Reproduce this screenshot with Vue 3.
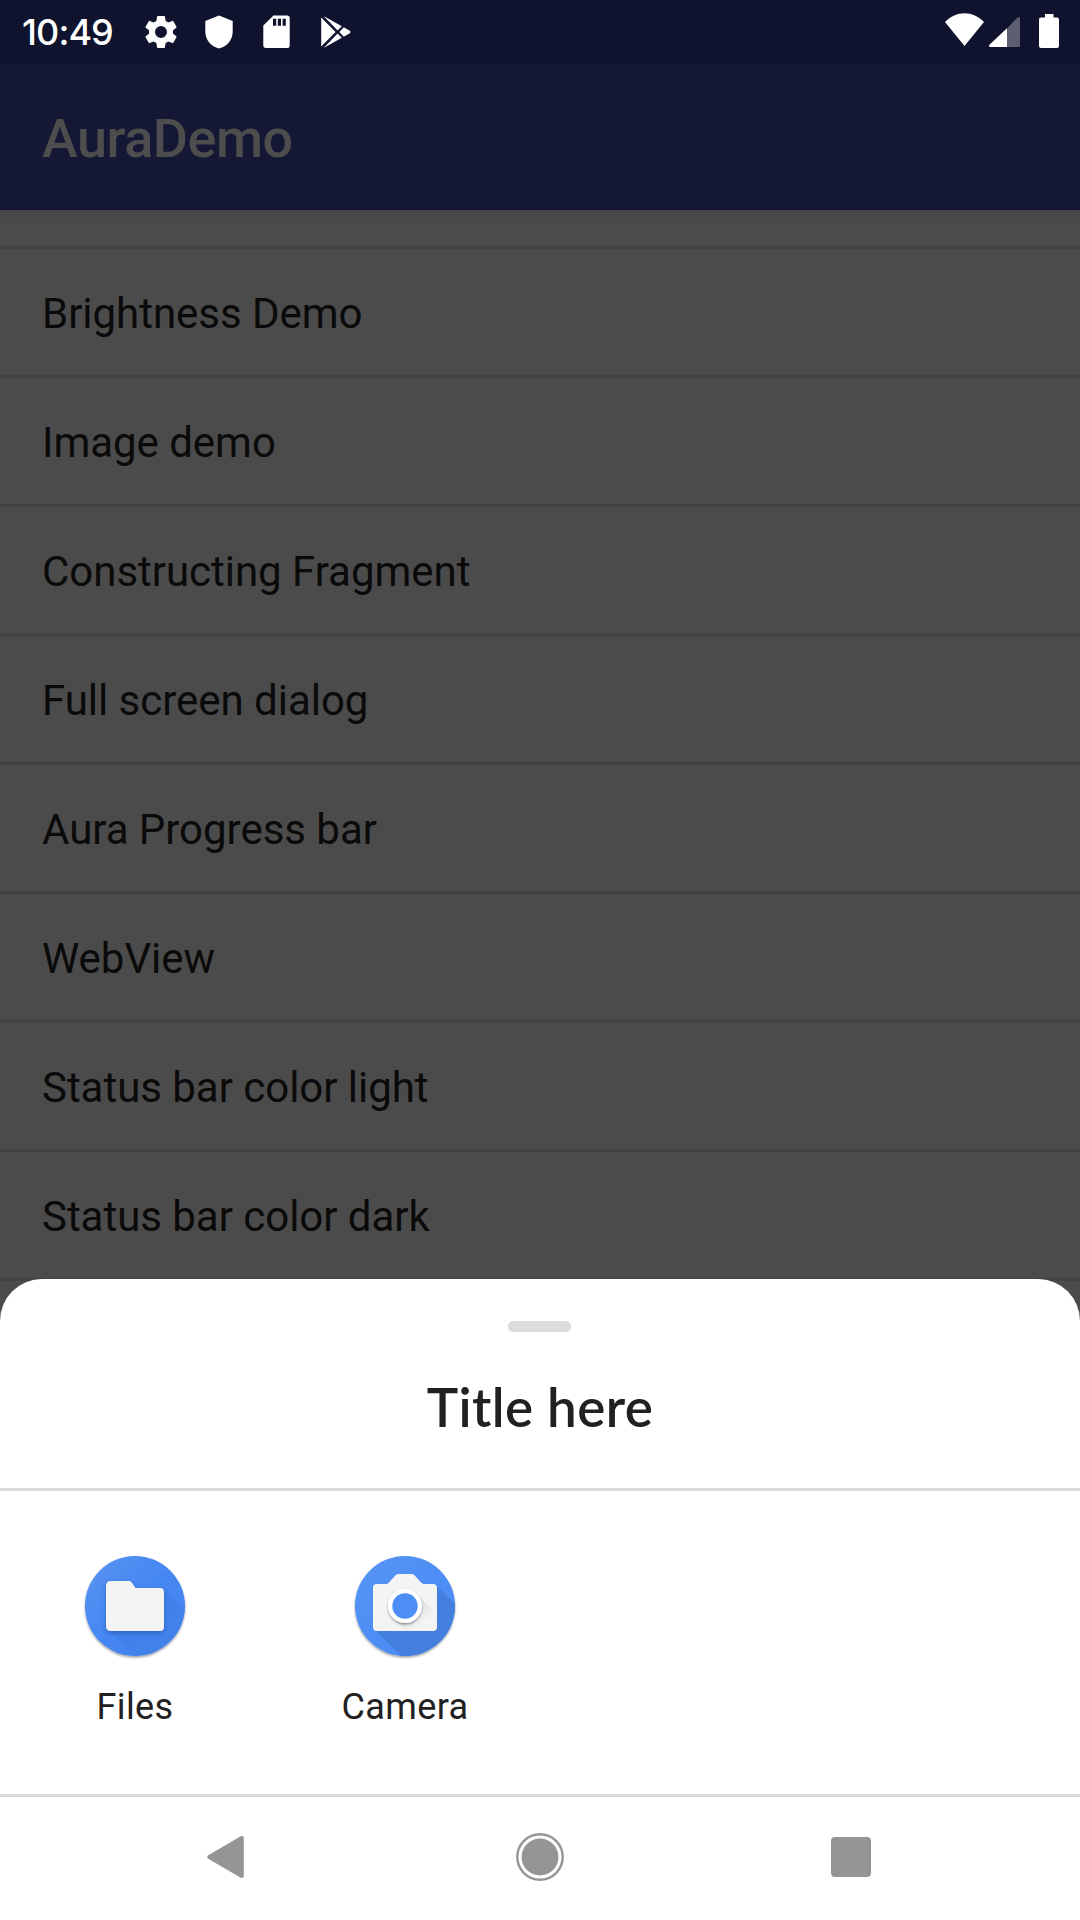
<script setup>
const items = [
  'Brightness Demo',
  'Image demo',
  'Constructing Fragment',
  'Full screen dialog',
  'Aura Progress bar',
  'WebView',
  'Status bar color light',
  'Status bar color dark',
]
</script>

<template>
  <div class="screen">
    <header class="status">
      <span class="clock">10:49</span>
      <svg class="gear" width="40" height="40" viewBox="0 0 24 24"><path d="M19.14 12.94c.04-.3.06-.61.06-.94s-.02-.64-.07-.94l2.03-1.58c.18-.14.23-.41.12-.61l-1.92-3.32c-.12-.22-.37-.29-.59-.22l-2.39.96c-.5-.38-1.03-.7-1.62-.94L14.4 2.81c-.04-.24-.24-.41-.48-.41h-3.84c-.24 0-.43.17-.47.41l-.36 2.54c-.59.24-1.13.57-1.62.94l-2.39-.96c-.22-.08-.47 0-.59.22L2.74 8.87c-.12.21-.08.47.12.61l2.03 1.58c-.05.3-.09.63-.09.94s.02.64.07.94l-2.03 1.58c-.18.14-.23.41-.12.61l1.92 3.32c.12.22.37.29.59.22l2.39-.96c.5.38 1.03.7 1.62.94l.36 2.54c.05.24.24.41.48.41h3.84c.24 0 .44-.17.47-.41l.36-2.54c.59-.24 1.13-.56 1.62-.94l2.39.96c.22.08.47 0 .59-.22l1.92-3.32c.12-.22.07-.47-.12-.61l-2.01-1.58zM12 15.6A3.6 3.6 0 1 1 12 8.400a3.600 3.600 0 0 1 0 7.200z" /></svg>
      <svg class="shield" width="28" height="34" viewBox="0 0 28 34"><path d="M14 .5L.3 6v10.500C.3 25 6 31.500 14 33.500c8-2 13.700-8.500 13.700-17V6z" /></svg>
      <svg class="sd" width="27" height="34" viewBox="0 0 27 34"><path fill-rule="evenodd" d="M10.500.5H24a2.700 2.700 0 0 1 2.700 2.700v27a2.700 2.700 0 0 1-2.700 2.800H3a2.700 2.700 0 0 1-2.700-2.700V10.500zM10 3.800v7h3.200v-7zM14.800 3.800v7H18v-7zM19.600 3.800v7h3.200v-7z" /></svg>
      <svg class="play" width="30" height="34" viewBox="0 0 30 34"><path d="M.2 2.500L14.600 17 .2 31.500zM2.600.9L20.800 11.200 16.600 15.500zM2.600 33.100L20.800 22.800 16.600 18.500zM22.800 12.300l6 3.500q1.400 1.200 0 2.400l-6 3.500-4.500-4.700z" /></svg>
      <svg class="wifi" width="39" height="34" viewBox="0 0 39 34"><path d="M0 9C11-2.700 28-2.700 39 9L19.500 33z" /></svg>
      <svg class="signal" width="31" height="32" viewBox="0 0 31 32"><path opacity=".32" d="M18 12.500L28.500 1.500Q31 0 31 2.500V29.500Q31 31 29.500 31H18z" /><path d="M18 12.300V31H1.500Q-1 30.500 .7 28.600z" /></svg>
      <svg class="battery" width="20" height="34" viewBox="0 0 20 34"><path d="M6 0h8.500v3.500H18a2 2 0 0 1 2 2V32a2 2 0 0 1-2 2H2a2 2 0 0 1-2-2V5.500a2 2 0 0 1 2-2h4z" /></svg>
    </header>
    <div class="appbar"><h1>AuraDemo</h1></div>
    <main class="list">
      <div class="stub"></div>
      <div v-for="item in items" :key="item" class="row">{{ item }}</div>
      <div class="stub last"></div>
      <section class="sheet">
        <div class="handle"></div>
        <h2>Title here</h2>
        <div class="apps">
          <div class="app">
            <svg width="112" height="112" viewBox="0 0 112 112">
              <defs>
                <linearGradient id="blueA" x1="0" y1="0" x2="1" y2="1"><stop offset="0" stop-color="#5a94f1" /><stop offset=".5" stop-color="#4587f2" /><stop offset="1" stop-color="#4382ec" /></linearGradient>
                <linearGradient id="shadeA" x1="0" y1="0" x2="1" y2="1"><stop offset="0" stop-color="#245bb8" stop-opacity=".24" /><stop offset=".75" stop-color="#245bb8" stop-opacity=".02" /></linearGradient>
                <clipPath id="disc"><circle cx="56" cy="56" r="50" /></clipPath>
                <filter id="soft" x="-20%" y="-20%" width="140%" height="140%"><feDropShadow dx="0" dy="1.500" stdDeviation="1.200" flood-opacity=".4" /></filter>
                <filter id="softBlue" x="-20%" y="-20%" width="140%" height="140%"><feDropShadow dx="0" dy="2" stdDeviation="2" flood-color="#123a80" flood-opacity=".4" /></filter>
              </defs>
              <circle cx="56" cy="56" r="50" fill="url(#blueA)" filter="url(#soft)" />
              <path clip-path="url(#disc)" fill="url(#shadeA)" d="M28 79.500L84 39l40 40v40H68z" />
              <path filter="url(#softBlue)" fill="#f4f4f4" d="M31.500 31H50q1.500 0 2.500 1.300L56.500 38H81a4 4 0 0 1 4 4v35a4 4 0 0 1-4 4H31.500a4.500 4.500 0 0 1-4.500-4.500V35.500a4.500 4.500 0 0 1 4.500-4.500z" />
            </svg>
            <span>Files</span>
          </div>
          <div class="app">
            <svg width="112" height="112" viewBox="0 0 112 112">
              <defs>
                <linearGradient id="blueB" x1="0" y1="0" x2="1" y2="1"><stop offset="0" stop-color="#5593f5" /><stop offset="1" stop-color="#488af4" /></linearGradient>
                <linearGradient id="lensShade" x1="0" y1="0" x2="1" y2="1"><stop offset="0" stop-color="#000" stop-opacity=".18" /><stop offset=".75" stop-color="#000" stop-opacity="0" /></linearGradient>
              </defs>
              <circle cx="56" cy="56" r="50" fill="url(#blueB)" filter="url(#soft)" />
              <path clip-path="url(#disc)" fill="#447fdd" d="M25.500 79.500L87 35l40 40v50H71z" />
              <path fill="#f4f4f4" d="M28 34h8.500q2 0 3.200-1.300l6.800-7.500q1.100-1.200 2.800-1.200h13.400q1.700 0 2.800 1.200l6.800 7.500q1.200 1.300 3.200 1.300H84a4 4 0 0 1 4 4v39a4 4 0 0 1-4 4H28a4 4 0 0 1-4-4V38a4 4 0 0 1 4-4z" />
              <path fill="url(#lensShade)" d="M68 44.500L88 64v13a4 4 0 0 1-4 4H57.500L43.500 67.500z" />
              <circle cx="56" cy="56" r="17" fill="#fff" filter="url(#soft)" />
              <circle cx="56" cy="56" r="12.700" fill="#4c8df6" />
            </svg>
            <span>Camera</span>
          </div>
        </div>
      </section>
    </main>
    <nav class="nav">
      <div><svg width="48" height="48" viewBox="0 0 48 48"><path d="M4.200 24L36.800 5v38z" stroke="#959595" stroke-width="4" stroke-linejoin="round" /></svg></div>
      <div><svg width="48" height="48" viewBox="0 0 48 48"><circle cx="24" cy="24" r="18.500" /><circle cx="24" cy="24" r="22.700" fill="none" stroke="#959595" stroke-width="2.400" /></svg></div>
      <div><svg width="48" height="48" viewBox="0 0 48 48"><rect x="4" y="4" width="40" height="40" rx="4" /></svg></div>
    </nav>
  </div>
</template>

<style>
body { margin: 0; background: #fff; }
</style>

<style scoped>
* { box-sizing: border-box; }
svg { display: block; flex: none; }
.screen {
  width: 1080px;
  height: 1920px;
  display: flex;
  flex-direction: column;
  overflow: hidden;
  background: #4b4b4b;
  font-family: Roboto, sans-serif;
}
.status {
  flex: 0 0 63px;
  display: flex;
  align-items: center;
  background: #0f132e;
  padding: 0 21px 0 22px;
  color: #fff;
  position: relative;
  z-index: 2;
}
.status svg { fill: #fff; }
.clock { width: 119px; font: 500 36px/62px Inter, sans-serif; letter-spacing: -.9px; white-space: nowrap; }
.shield { margin-left: 24px; }
.sd { margin-left: 30px; }
.play { margin-left: 31px; }
.wifi { margin: 0 5px 3px auto; }
.battery { margin: 0 0 1px 19px; }
.appbar {
  flex: 0 0 147px;
  display: flex;
  align-items: center;
  padding: 0 42px;
  background: #141834;
  box-shadow: 0 2px 12px rgba(0, 0, 0, .12);
  z-index: 1;
}
h1 { margin: 4px 0 0; font-size: 54px; font-weight: 500; line-height: 64px; letter-spacing: -.5px; color: #4d4d4d; }
.list { flex: 0 0 1587px; position: relative; }
.stub { height: 39px; border-bottom: 3px solid #424242; }
.row {
  height: 129px;
  padding: 2px 42px 0;
  border-bottom: 3px solid #424242;
  font-size: 42px;
  line-height: 126px;
  letter-spacing: -.03px;
  color: #0a0a0a;
}
.last { border: 0; }
.sheet {
  position: absolute;
  left: 0;
  right: 0;
  bottom: 0;
  height: 518px;
  display: flex;
  flex-direction: column;
  background: #fff;
  border-radius: 42px 42px 0 0;
  border-bottom: 3px solid #dadadf;
}
.handle { width: 63px; height: 11px; margin: 42px auto 0 508px; border-radius: 5px; background: #dcdcdc; }
h2 {
  height: 159px;
  margin: 0;
  border-bottom: 3px solid #dadadf;
  text-align: center;
  font: 600 53px/150px Lato, sans-serif;
  letter-spacing: .4px;
  color: #212121;
}
.apps { display: flex; padding-top: 59px; }
.app { width: 270px; display: flex; flex-direction: column; align-items: center; }
.app span { margin-top: 23px; font-size: 36px; line-height: 44px; letter-spacing: .4px; color: #212121; }
.nav { flex: 0 0 123px; display: flex; justify-content: space-between; padding: 36px 205px 0; background: #fff; }
.nav svg { fill: #959595; }
</style>
